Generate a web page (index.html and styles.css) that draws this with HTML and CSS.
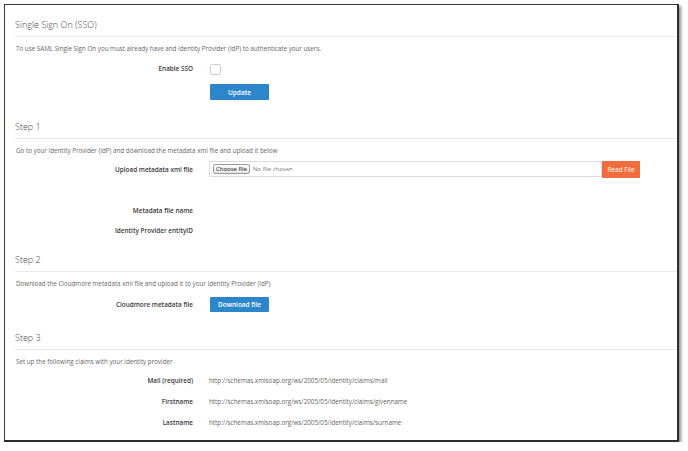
FILE: index.html
```html
<!DOCTYPE html>
<html>
<head>
<meta charset="utf-8">
<link rel="stylesheet" href="styles.css">
</head>
<body>
<div class="window">
  <section class="sec sec-sso">
    <h2 class="legend">Single Sign On (SSO)</h2>
    <p class="desc">To use SAML Single Sign On you must already have and Identity Provider (IdP) to authenticate your users.</p>
    <div class="row r-enable">
      <div class="lbl">Enable SSO</div>
      <div class="ctl"><span class="checkbox"></span></div>
    </div>
    <div class="row r-update">
      <div class="lbl"></div>
      <div class="ctl"><span class="btn btn-blue btn-update">Update</span></div>
    </div>
  </section>

  <section class="sec sec-step1">
    <h2 class="legend">Step 1</h2>
    <p class="desc">Go to your Identity Provider (IdP) and download the metadata xml file and upload it below</p>
    <div class="row r-upload">
      <div class="lbl">Upload metadata xml file</div>
      <div class="ctl">
        <div class="input-group">
          <div class="file-input"><span class="choose">Choose file</span><span class="nofile">No file chosen</span></div>
          <span class="btn-orange">Read File</span>
        </div>
      </div>
    </div>
    <div class="row r-text r-meta">
      <div class="lbl">Metadata file name</div>
      <div class="ctl"></div>
    </div>
    <div class="row r-text r-entity">
      <div class="lbl">Identity Provider entityID</div>
      <div class="ctl"></div>
    </div>
  </section>

  <section class="sec sec-step2">
    <h2 class="legend">Step 2</h2>
    <p class="desc">Download the Cloudmore metadata xml file and upload it to your Identity Provider (IdP)</p>
    <div class="row r-download">
      <div class="lbl">Cloudmore metadata file</div>
      <div class="ctl"><span class="btn btn-blue btn-download">Download file</span></div>
    </div>
  </section>

  <section class="sec sec-step3">
    <h2 class="legend">Step 3</h2>
    <p class="desc">Set up the following claims with your identity provider</p>
    <div class="row r-text r-mail">
      <div class="lbl">Mail (required)</div>
      <div class="ctl val">http://schemas.xmlsoap.org/ws/2005/05/identity/claims/mail</div>
    </div>
    <div class="row r-text r-claim">
      <div class="lbl">Firstname</div>
      <div class="ctl val">http://schemas.xmlsoap.org/ws/2005/05/identity/claims/givenname</div>
    </div>
    <div class="row r-text r-claim">
      <div class="lbl">Lastname</div>
      <div class="ctl val">http://schemas.xmlsoap.org/ws/2005/05/identity/claims/surname</div>
    </div>
  </section>
</div>
</body>
</html>
```

FILE: styles.css
```css
* { box-sizing: border-box; }
html, body { margin: 0; padding: 0; background: #ffffff; }
body {
  font-family: "Open Sans", "DejaVu Sans", sans-serif;
  color: #555;
}
.window {
  margin: 4px 0 0 4px;
  width: 675px;
  height: 438px;
  border: 1px solid #3a3a3a;
  border-right: 2px solid #2e2e2e;
  border-bottom: 2px solid #2e2e2e;
  box-shadow: 2px 2px 3px rgba(0,0,0,0.45);
  padding: 14px 0 0 10px;
  background: #fff;
  overflow: hidden;
}
.legend {
  margin: 0;
  font-size: 9px;
  font-weight: 300;
  line-height: 12px;
  color: #444;
  padding-bottom: 5px;
  border-bottom: 1px solid #e8e8e8;
}
.sec-step1 .legend { margin-top: 21px; }
.sec-step2 .legend { margin-top: 17px; }
.sec-step3 .legend { margin-top: 20px; }
.desc {
  margin: 7px 0 0 1px;
  font-size: 6.25px;
  line-height: 10px;
  color: #666;
}
.row {
  display: grid;
  grid-template-columns: 178px 1fr;
  column-gap: 16px;
  align-items: center;
}
.lbl {
  text-align: right;
  font-size: 6.4px;
  font-weight: 600;
  color: #3a3a3a;
  line-height: 12px;
}
.ctl { display: flex; align-items: center; }
.r-enable { margin-top: 9px; height: 11px; }
.r-update { margin-top: 10px; height: 16px; }
.r-upload { margin-top: 5px; height: 17px; }
.r-meta { margin-top: 27px; }
.r-entity { margin-top: 8px; }
.r-download { margin-top: 8px; height: 15px; }
.r-mail { margin-top: 8px; }
.r-claim { margin-top: 9px; }
.r-text { height: 12px; }
.checkbox {
  display: block;
  margin-left: 1px;
  width: 11px;
  height: 11px;
  border: 1px solid #cfcfcf;
  border-radius: 2px;
  background: #fff;
}
.btn {
  display: flex;
  align-items: center;
  justify-content: center;
  margin-left: 1px;
  font-size: 6.5px;
  font-weight: 600;
  color: #fff;
  background: #2b87c9;
  border-radius: 1px;
}
.btn-update { width: 59px; height: 16px; }
.btn-download { width: 59px; height: 15px; }
.input-group {
  display: flex;
  width: 431px;
  height: 17px;
}
.file-input {
  flex: 1;
  height: 16px;
  border: 1px solid #dcdcdc;
  background: #fff;
  display: flex;
  align-items: center;
  padding-left: 3px;
}
.choose {
  display: flex;
  align-items: center;
  justify-content: center;
  width: 37px;
  height: 10px;
  border: 1px solid #9a9a9a;
  border-radius: 2px;
  background: linear-gradient(#fdfdfd, #e4e4e4);
  font-size: 6px;
  color: #111;
}
.nofile {
  margin-left: 3px;
  font-size: 6px;
  color: #777;
}
.btn-orange {
  display: flex;
  align-items: center;
  justify-content: center;
  width: 38px;
  height: 17px;
  background: #f26d3d;
  color: #fff;
  font-size: 6.5px;
  font-weight: 400;
}
.val {
  font-size: 6.3px;
  color: #666;
  line-height: 12px;
}
```
